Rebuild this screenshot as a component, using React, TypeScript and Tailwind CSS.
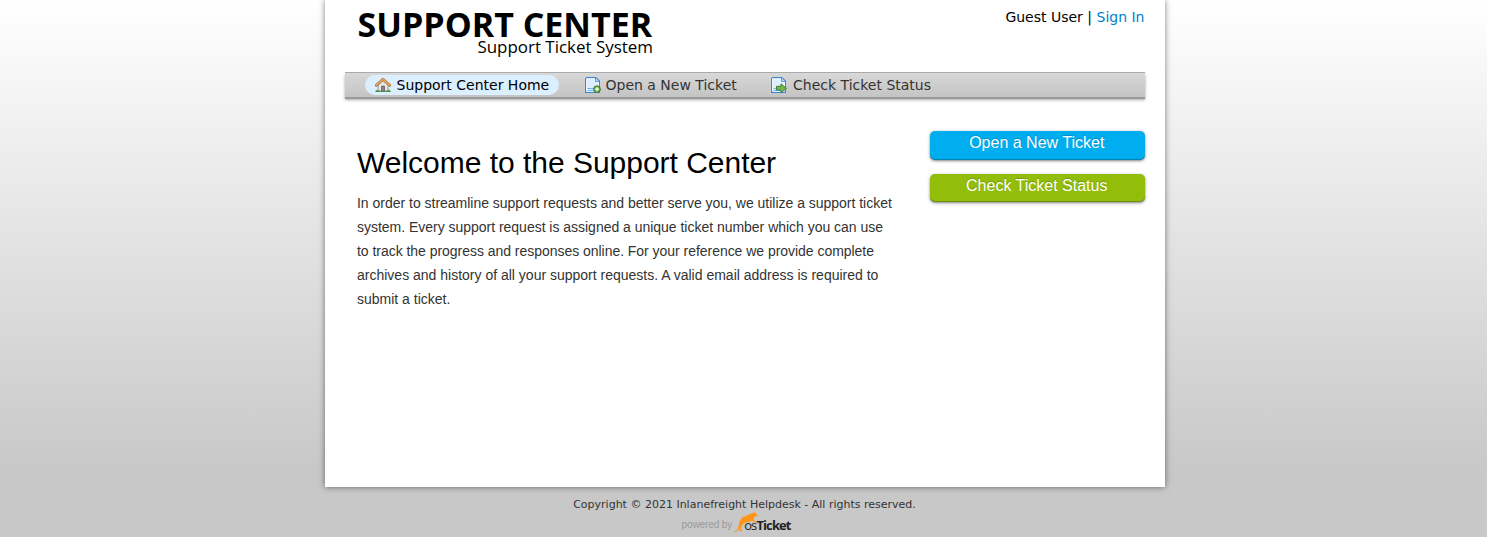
import React from "react";

function HomeIcon() {
  return (
    <svg width="16" height="16" viewBox="0 0 16 16" className="shrink-0">
      <path d="M0.5 14.5C1 12.6 3 12.4 4 13h8c1.500-.8 3-.4 3.500 1.500z" fill="#58b04a" />
      <path d="M3 7.500 8 3l5 4.500V14H3z" fill="#e9e5e2" stroke="#8d8783" strokeWidth="0.8" />
      <path d="M6.500 9h3v5.500h-3z" fill="#85817e" stroke="#5f5c5a" strokeWidth="0.7" />
      <path d="M1.400 8.300 8 2.300l6.600 6" fill="none" stroke="#9b672c" strokeWidth="2.800" strokeLinejoin="round" strokeLinecap="round" />
      <path d="M1.400 8.100 8 2.200l6.600 5.900" fill="none" stroke="#e3a762" strokeWidth="1.700" strokeLinejoin="round" strokeLinecap="round" />
      <path d="M0.500 14.400h5M10.500 14.400h5" stroke="#3b9637" strokeWidth="1.300" />
    </svg>
  );
}

function Page() {
  return (
    <>
      <path d="M1.600 .6h9.200L14.400 4v11.400H.6V1.600z" fill="#dceefd" stroke="#3d80cc" strokeWidth="1.100" strokeLinejoin="round" />
      <path d="M1.700 1.700h8.500v3.300h3.100v9.300H1.700z" fill="none" stroke="#fff" strokeWidth="0.800" />
      <path d="M10.500 1v3.500h3.600" fill="#b9dcfa" stroke="#4f91d6" strokeWidth="0.900" />
      <path d="M2.500 11.500h7.500M2.500 13.500h7.500" stroke="#62bdf5" strokeWidth="1.200" />
    </>
  );
}

function NewIcon() {
  return (
    <svg width="16" height="16" viewBox="0 0 16 16" className="shrink-0">
      <Page />
      <circle cx="12" cy="12.200" r="3.400" fill="#6ba746" stroke="#3d772a" strokeWidth="0.900" />
      <path d="M12 10.200v4M10 12.200h4" stroke="#fff" strokeWidth="1.300" />
    </svg>
  );
}

function StatusIcon() {
  return (
    <svg width="16" height="16" viewBox="0 0 16 16" className="shrink-0">
      <Page />
      <path d="M5.500 9.300h4.500V6.900l5.500 4.500-5.500 4.200v-2.500H5.500z" fill="#72b64c" stroke="#397d2a" strokeWidth="0.900" strokeLinejoin="round" />
    </svg>
  );
}

function Kangaroo() {
  return (
    <svg width="28" height="22" viewBox="0 0 28 22" className="absolute left-[52px] top-[-2px]">
      <path
        d="M.8 20.300C4 19.800 4.600 17 5.400 13.500 6.400 8.600 8.500 6 12 5c3-.9 5.500-2.600 8-2.900L21 .4l.9 2 2.300 1.700c.4.800-.6 1.200-2.200 1-1.200 1.300-1.300 2.600-2.200 3.700l2 1.500 1.600.2-.2.900-2.200-.2-2.800-1.800c-1.300 1-2.500 1.300-3.600 1.500L11.200 12c-2 1.200-3 2.300-3.400 4l-.6 2.600 1.600.5v.8H5.700l.5-4.200C5 18.500 4 20.900.8 21z"
        fill="#ff9418"
      />
    </svg>
  );
}

export default function App() {
  return (
    <div className="h-[537px] overflow-hidden bg-[#c8c8c8] bg-[linear-gradient(to_bottom,#ffffff_0px,#c8c8c8_470px)] pl-[3px] font-['DejaVu_Sans',sans-serif] text-[14px] text-black">
      <main className="mx-auto h-[487px] w-[840px] bg-white px-5 shadow-[0_0_6px_rgba(0,0,0,0.5)]">
        <header className="flex h-[72px] justify-between">
          <div className="ml-3 w-[296px] pt-[8px] font-['Open_Sans',sans-serif]">
            <div className="whitespace-nowrap pl-[0.500px] text-[34px] font-bold leading-[32px]">SUPPORT CENTER</div>
            <div className="-mt-[4px] whitespace-nowrap text-right text-[16.950px] leading-[22px]">Support Ticket System</div>
          </div>
          <div className="pr-[0.500px] pt-[7px] leading-5">
            Guest User | <a className="text-[#0080cc]">Sign In</a>
          </div>
        </header>
        <nav className="flex h-[25px] items-start border-t border-[#aaa] bg-linear-to-b from-[#d8d8d8] to-[#c4c4c4] pl-5 pt-[2px] text-[#333] shadow-[0_2px_0_#999,0_3px_3px_rgba(0,0,0,0.35)]">
          <a className="flex h-5 w-[194px] items-center gap-[5.500px] whitespace-nowrap rounded-full bg-[#dbefff] pl-[10px] text-black"><HomeIcon />Support Center Home</a>
          <a className="ml-[26px] flex h-5 w-[152px] items-center gap-[4.500px] whitespace-nowrap"><NewIcon />Open a New Ticket</a>
          <a className="ml-[34px] flex h-5 items-center gap-[6px] whitespace-nowrap"><StatusIcon />Check Ticket Status</a>
        </nav>
        <div className="flex justify-between font-['Liberation_Sans',sans-serif]">
          <section className="ml-3 w-[540px] pt-[48px]">
            <h1 className="text-[30px] leading-9 tracking-[-0.020px]">Welcome to the Support Center</h1>
            <p className="mt-[10px] whitespace-nowrap text-[14px] leading-6 text-[#333]">
              <span className="tracking-[-0.015px]">In order to streamline support requests and better serve you, we utilize a support ticket</span><br />
              <span className="tracking-[-0.020px]">system. Every support request is assigned a unique ticket number which you can use</span><br />
              <span className="tracking-[-0.035px]">to track the progress and responses online. For your reference we provide complete</span><br />
              archives and history of all your support requests. A valid email address is required to<br />
              submit a ticket.
            </p>
          </section>
          <aside className="flex w-[215px] flex-col gap-[14px] pt-[34px] text-center text-[16px] leading-6 text-white [text-shadow:0_-1px_1px_rgba(0,0,0,0.2)]">
            <a className="h-[29px] rounded-[5px] bg-[#00aeef] pr-[1.500px] shadow-[0_1px_3px_rgba(0,0,0,0.5),inset_0_-1px_0_rgba(0,0,0,0.25)]">Open a New Ticket</a>
            <a className="h-[28px] rounded-[5px] bg-[#92bd08] pr-[1.500px] shadow-[0_1px_3px_rgba(0,0,0,0.5),inset_0_-1px_0_rgba(0,0,0,0.25)]">Check Ticket Status</a>
          </aside>
        </div>
      </main>
      <footer className="pt-[10px] text-center text-[11px] leading-4 text-[#333]">
        <p className="pr-px">Copyright © 2021 Inlanefreight Helpdesk - All rights reserved.</p>
        <div className="relative mx-auto flex h-[24px] w-[110px] translate-x-[-8.500px] items-center whitespace-nowrap">
          <Kangaroo />
          <span className="font-['Liberation_Sans',sans-serif] text-[10px] tracking-[-0.100px] text-[#999]">powered by</span>
          <span className="relative ml-[12px] font-['Open_Sans',sans-serif] text-[13px] tracking-[-0.900px] text-[#222]">os<b>Ticket</b></span>
        </div>
      </footer>
    </div>
  );
}
